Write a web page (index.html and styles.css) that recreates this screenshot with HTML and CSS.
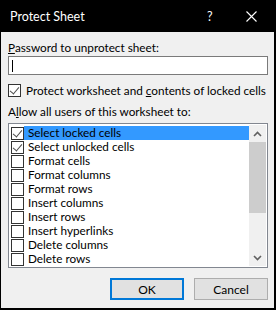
FILE: index.html
```html
<!DOCTYPE html>
<html lang="en">
<head>
    <meta charset="UTF-8">
    <title>Protect Sheet</title>
    <link rel="stylesheet" href="styles.css">
</head>
<body>
    <div class="dialog">
        <div class="titlebar">
            <span class="title">Protect Sheet</span>
            <span class="help">?</span>
            <span class="close">
                <svg width="11" height="11" viewBox="0 0 11 11"><path d="M0.5 0.5 L10.5 10.5 M10.5 0.5 L0.5 10.5" stroke="#fff" stroke-width="1.1" fill="none"/></svg>
            </span>
        </div>

        <div class="body">
            <div class="label"><u>P</u>assword to unprotect sheet:</div>
            <div class="password"><span class="caret"></span></div>

            <div class="check-row">
                <span class="box checked"></span>
                <span>Protect worksheet and <u>c</u>ontents of locked cells</span>
            </div>

            <div class="label">A<u>l</u>low all users of this worksheet to:</div>
            <div class="listbox">
                <div class="items">
                    <div class="item selected"><span class="box checked"></span><span class="text">Select locked cells</span></div>
                    <div class="item"><span class="box checked"></span><span class="text">Select unlocked cells</span></div>
                    <div class="item"><span class="box"></span><span class="text">Format cells</span></div>
                    <div class="item"><span class="box"></span><span class="text">Format columns</span></div>
                    <div class="item"><span class="box"></span><span class="text">Format rows</span></div>
                    <div class="item"><span class="box"></span><span class="text">Insert columns</span></div>
                    <div class="item"><span class="box"></span><span class="text">Insert rows</span></div>
                    <div class="item"><span class="box"></span><span class="text">Insert hyperlinks</span></div>
                    <div class="item"><span class="box"></span><span class="text">Delete columns</span></div>
                    <div class="item"><span class="box"></span><span class="text">Delete rows</span></div>
                </div>
                <div class="scrollbar">
                    <div class="arrow">
                        <svg width="9" height="6" viewBox="0 0 9 6"><path d="M1 5 L4.5 1.5 L8 5" stroke="#606060" stroke-width="1.6" fill="none"/></svg>
                    </div>
                    <div class="track"><div class="thumb"></div></div>
                    <div class="arrow">
                        <svg width="9" height="6" viewBox="0 0 9 6"><path d="M1 1 L4.5 4.5 L8 1" stroke="#606060" stroke-width="1.6" fill="none"/></svg>
                    </div>
                </div>
            </div>

            <div class="buttons">
                <button class="btn default">OK</button>
                <button class="btn">Cancel</button>
            </div>
        </div>
    </div>
</body>
</html>
```

FILE: styles.css
```css
* {
    margin: 0;
    padding: 0;
    box-sizing: border-box;
}

body {
    font-family: Lato, 'Liberation Sans', sans-serif;
    font-size: 11.75px;
    color: #000;
    background: #000;
}

.dialog {
    width: 276px;
    height: 310px;
    background: #f0f0f0;
    border-left: 1px solid #000;
    border-right: 2px solid #000;
    border-bottom: 2px solid #000;
    display: flex;
    flex-direction: column;
}

.titlebar {
    height: 32px;
    background: #000;
    color: #fff;
    display: flex;
    align-items: center;
    padding-left: 9px;
    font-size: 12.5px;
}

.title {
    flex: 1;
}

.help {
    width: 16px;
    margin-right: 23px;
}

.close {
    display: flex;
    margin-right: 17px;
}

.body {
    padding: 8px 6px 0 7px;
    white-space: nowrap;
}

.label {
    height: 16px;
    line-height: 16px;
}

.password {
    height: 19px;
    background: #fff;
    border: 1px solid #7a7a7a;
    padding: 3px 0 0 3px;
}

.caret {
    display: block;
    width: 1px;
    height: 12px;
    background: #000;
}

.check-row {
    display: flex;
    align-items: center;
    gap: 5px;
    margin: 8px 0 7px;
    height: 14px;
}

.box {
    width: 13px;
    height: 13px;
    border: 1px solid #333;
    background: #fff;
    flex: none;
    position: relative;
}

.box.checked::after {
    content: '';
    position: absolute;
    left: 3px;
    top: 0px;
    width: 4px;
    height: 8px;
    border-right: 1.5px solid #4d4d4d;
    border-bottom: 1.5px solid #4d4d4d;
    transform: rotate(40deg);
}

.listbox {
    margin-top: 3px;
    height: 145px;
    border: 1px solid #828790;
    background: #fff;
    display: flex;
    padding: 1px;
}

.items {
    flex: 1;
    padding-top: 1px;
}

.item {
    display: flex;
    align-items: center;
    height: 14px;
    padding-left: 1px;
}

.item .text {
    flex: 1;
    height: 14px;
    line-height: 14px;
    padding-left: 4px;
}

.item.selected .text {
    background: #3399ff;
}

.scrollbar {
    width: 17px;
    background: #f0f0f0;
    display: flex;
    flex-direction: column;
}

.arrow {
    height: 17px;
    display: flex;
    align-items: center;
    justify-content: center;
}

.track {
    flex: 1;
}

.thumb {
    height: 71px;
    background: #cdcdcd;
}

.buttons {
    display: flex;
    justify-content: flex-end;
    gap: 10px;
    margin-top: 10px;
}

.btn {
    width: 74px;
    height: 22px;
    font-family: inherit;
    font-size: 12px;
    background: #e1e1e1;
    border: 1px solid #adadad;
    color: #000;
}

.btn.default {
    border: 2px solid #0078d7;
}
```
